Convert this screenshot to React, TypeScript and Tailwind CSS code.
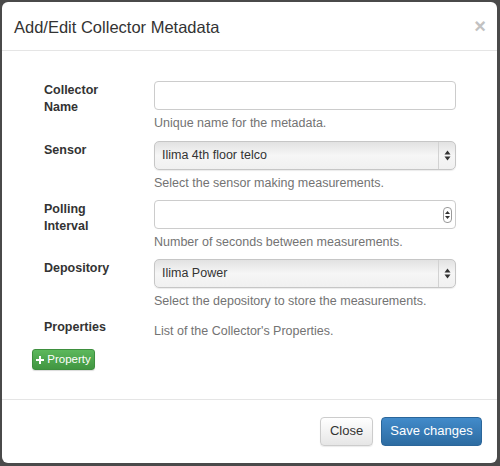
import React from "react";

const font = { fontFamily: '"Liberation Sans", Arial, sans-serif' };

function SelectArrows() {
  return (
    <svg width="7" height="11" viewBox="0 0 7 11">
      <path d="M3.5 0.5 L6.5 4.5 L0.5 4.5 Z" fill="#333" />
      <path d="M3.5 10.5 L6.5 6.5 L0.5 6.5 Z" fill="#333" />
    </svg>
  );
}

function Select({ value }: { value: string }) {
  return (
    <div className="h-[29px] rounded-[5px] border border-[#c6c6c6] bg-gradient-to-b from-[#e2e2e2] via-[#f6f6f6] to-[#f0f0f0] flex items-center shadow-[0_1px_1px_rgba(0,0,0,0.08)]">
      <div className="flex-1 pl-[7px] text-[12.5px] text-[#333]">{value}</div>
      <div className="w-px h-full bg-[#d2d2d2]" />
      <div className="w-[16px] flex justify-center">
        <SelectArrows />
      </div>
    </div>
  );
}

function Row({
  label,
  control,
  help,
  mb,
}: {
  label: React.ReactNode;
  control: React.ReactNode;
  help: string;
  mb: string;
}) {
  return (
    <div className={`grid grid-cols-[110px_302px] ${mb}`}>
      <div className="text-[12.5px] leading-[17px] font-bold text-[#333] pt-[1px]">{label}</div>
      <div>
        {control}
        <div className="mt-[5px] text-[12.5px] leading-[17px] text-[#737373]">{help}</div>
      </div>
    </div>
  );
}

export default function App() {
  return (
    <div
      className="w-[500px] h-[466px] bg-[#4a4a4a] pt-[2px] pl-[2px] pr-[3px] pb-[3px]"
      style={font}
    >
      <div className="h-full bg-white rounded-[6px] flex flex-col overflow-hidden">
        <div className="h-[49px] shrink-0 border-b border-[#e5e5e5] flex items-center justify-between pl-[12px] pr-[11px]">
          <div className="text-[16.5px] text-[#333] pt-[2px]">Add/Edit Collector Metadata</div>
          <div className="text-[20px] font-bold text-[#c2c2c2] leading-none">×</div>
        </div>
        <div className="flex-1 pt-[30px] pl-[30px]">
          <div className="pl-[12px]">
            <Row
              mb="mb-[9px]"
              label={
                <>
                  Collector
                  <br />
                  Name
                </>
              }
              control={<div className="h-[29px] rounded-[4px] border border-[#cccccc] bg-white" />}
              help="Unique name for the metadata."
            />
            <Row
              mb="mb-[8px]"
              label="Sensor"
              control={<Select value="Ilima 4th floor telco" />}
              help="Select the sensor making measurements."
            />
            <Row
              mb="mb-[8px]"
              label={
                <>
                  Polling
                  <br />
                  Interval
                </>
              }
              control={
                <div className="h-[29px] rounded-[4px] border border-[#cccccc] bg-white flex items-center justify-end pr-[3px]">
                  <div className="w-[9px] h-[16px] rounded-[4px] border border-[#9a9a9a] flex flex-col items-center justify-center gap-[2px]">
                    <svg width="5" height="3" viewBox="0 0 5 3">
                      <path d="M2.5 0 L5 3 L0 3 Z" fill="#333" />
                    </svg>
                    <svg width="5" height="3" viewBox="0 0 5 3">
                      <path d="M2.5 3 L5 0 L0 0 Z" fill="#333" />
                    </svg>
                  </div>
                </div>
              }
              help="Number of seconds between measurements."
            />
            <Row
              mb="mb-[8px]"
              label="Depository"
              control={<Select value="Ilima Power" />}
              help="Select the depository to store the measurements."
            />
            <div className="grid grid-cols-[110px_302px]">
              <div className="text-[12.5px] leading-[17px] font-bold text-[#333] pt-[1px]">Properties</div>
              <div className="pt-[5px] text-[12.5px] leading-[17px] text-[#737373]">
                List of the Collector's Properties.
              </div>
            </div>
          </div>
          <div className="mt-[9px]">
            <button className="h-[21px] w-[63px] rounded-[3px] border border-[#3e8f3e] bg-gradient-to-b from-[#5cb85c] to-[#419641] text-white text-[11.5px] flex items-center justify-center gap-[3px] shadow-[0_1px_1px_rgba(0,0,0,0.15)]">
              <svg width="8" height="8" viewBox="0 0 8 8">
                <path d="M3 0 H5 V3 H8 V5 H5 V8 H3 V5 H0 V3 H3 Z" fill="#fff" />
              </svg>
              <span>Property</span>
            </button>
          </div>
        </div>
        <div className="border-t border-[#e5e5e5] h-[64px] shrink-0 flex items-center justify-end gap-[8px] pr-[15px] pb-[1px]">
          <button className="h-[29px] w-[53px] rounded-[4px] border border-[#cccccc] bg-gradient-to-b from-white to-[#e6e6e6] text-[13px] text-[#333] shadow-[0_1px_1px_rgba(0,0,0,0.08)]">
            Close
          </button>
          <button className="h-[29px] w-[101px] rounded-[4px] border border-[#2b669a] bg-gradient-to-b from-[#428bca] to-[#2d6ca2] text-[13px] text-white">
            Save changes
          </button>
        </div>
      </div>
    </div>
  );
}
